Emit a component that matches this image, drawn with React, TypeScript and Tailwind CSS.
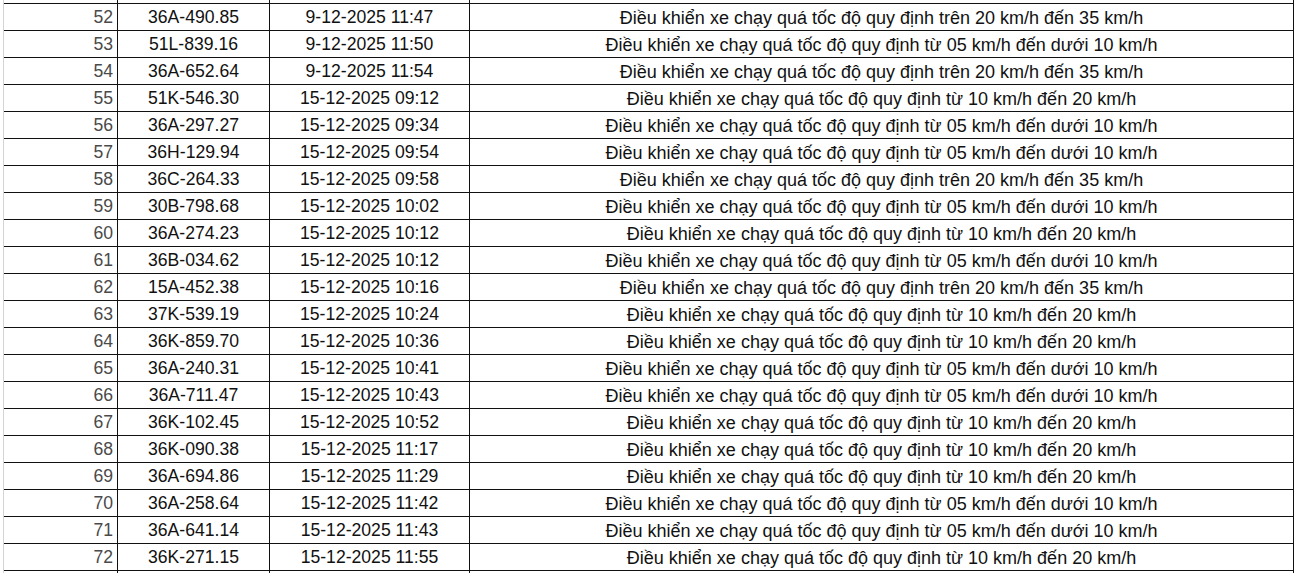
// Speed-violation list, rows 52–72 of a spreadsheet-style table.
const OVER_20 = "Điều khiển xe chạy quá tốc độ quy định trên 20 km/h đến 35 km/h";
const FROM_05 = "Điều khiển xe chạy quá tốc độ quy định từ 05 km/h đến dưới 10 km/h";
const FROM_10 = "Điều khiển xe chạy quá tốc độ quy định từ 10 km/h đến 20 km/h";

const rows: [number, string, string, string][] = [
  [52, "36A-490.85", "9-12-2025 11:47", OVER_20],
  [53, "51L-839.16", "9-12-2025 11:50", FROM_05],
  [54, "36A-652.64", "9-12-2025 11:54", OVER_20],
  [55, "51K-546.30", "15-12-2025 09:12", FROM_10],
  [56, "36A-297.27", "15-12-2025 09:34", FROM_05],
  [57, "36H-129.94", "15-12-2025 09:54", FROM_05],
  [58, "36C-264.33", "15-12-2025 09:58", OVER_20],
  [59, "30B-798.68", "15-12-2025 10:02", FROM_05],
  [60, "36A-274.23", "15-12-2025 10:12", FROM_10],
  [61, "36B-034.62", "15-12-2025 10:12", FROM_05],
  [62, "15A-452.38", "15-12-2025 10:16", OVER_20],
  [63, "37K-539.19", "15-12-2025 10:24", FROM_10],
  [64, "36K-859.70", "15-12-2025 10:36", FROM_10],
  [65, "36A-240.31", "15-12-2025 10:41", FROM_05],
  [66, "36A-711.47", "15-12-2025 10:43", FROM_05],
  [67, "36K-102.45", "15-12-2025 10:52", FROM_10],
  [68, "36K-090.38", "15-12-2025 11:17", FROM_10],
  [69, "36A-694.86", "15-12-2025 11:29", FROM_10],
  [70, "36A-258.64", "15-12-2025 11:42", FROM_05],
  [71, "36A-641.14", "15-12-2025 11:43", FROM_05],
  [72, "36K-271.15", "15-12-2025 11:55", FROM_10],
];

function Row({ cells, h }: { cells: [string, string, string, string]; h: string }) {
  return (
    <div className={"flex " + h}>
      <div className="w-[3px] shrink-0" />
      <div className="w-px shrink-0 bg-[#d4d4d4]" />
      <div className="flex w-[114px] shrink-0 items-center justify-end border-r border-b border-[#111] pt-px pr-[4px] text-[#4a4a4a]">
        {cells[0]}
      </div>
      <div className="flex w-[152px] shrink-0 items-center justify-center border-r border-b border-[#111] pt-px">
        {cells[1]}
      </div>
      <div className="flex w-[200px] shrink-0 items-center justify-center border-r border-b border-[#111] pt-px">
        {cells[2]}
      </div>
      <div className="flex w-[824px] shrink-0 items-center justify-center border-r border-b border-[#111] pt-px text-[18px]">
        {cells[3]}
      </div>
    </div>
  );
}

export default function App() {
  return (
    <div
      className="h-[573px] w-[1296px] overflow-hidden bg-white text-[17.6px] leading-none text-[#111]"
      style={{ fontFamily: '"Liberation Sans", Arial, sans-serif' }}
    >
      <Row cells={["", "", "", ""]} h="h-[4px]" />
      {rows.map(([n, plate, time, desc]) => (
        <Row key={n} cells={[String(n), plate, time, desc]} h="h-[27px]" />
      ))}
      <div className="flex h-[3px]">
        <div className="w-[3px] shrink-0" />
        <div className="w-px shrink-0 bg-[#d4d4d4]" />
        <div className="w-[114px] shrink-0 border-r border-[#111]" />
        <div className="w-[152px] shrink-0 border-r border-[#111]" />
        <div className="w-[200px] shrink-0 border-r border-[#111]" />
        <div className="w-[824px] shrink-0 border-r border-[#111]" />
      </div>
    </div>
  );
}
